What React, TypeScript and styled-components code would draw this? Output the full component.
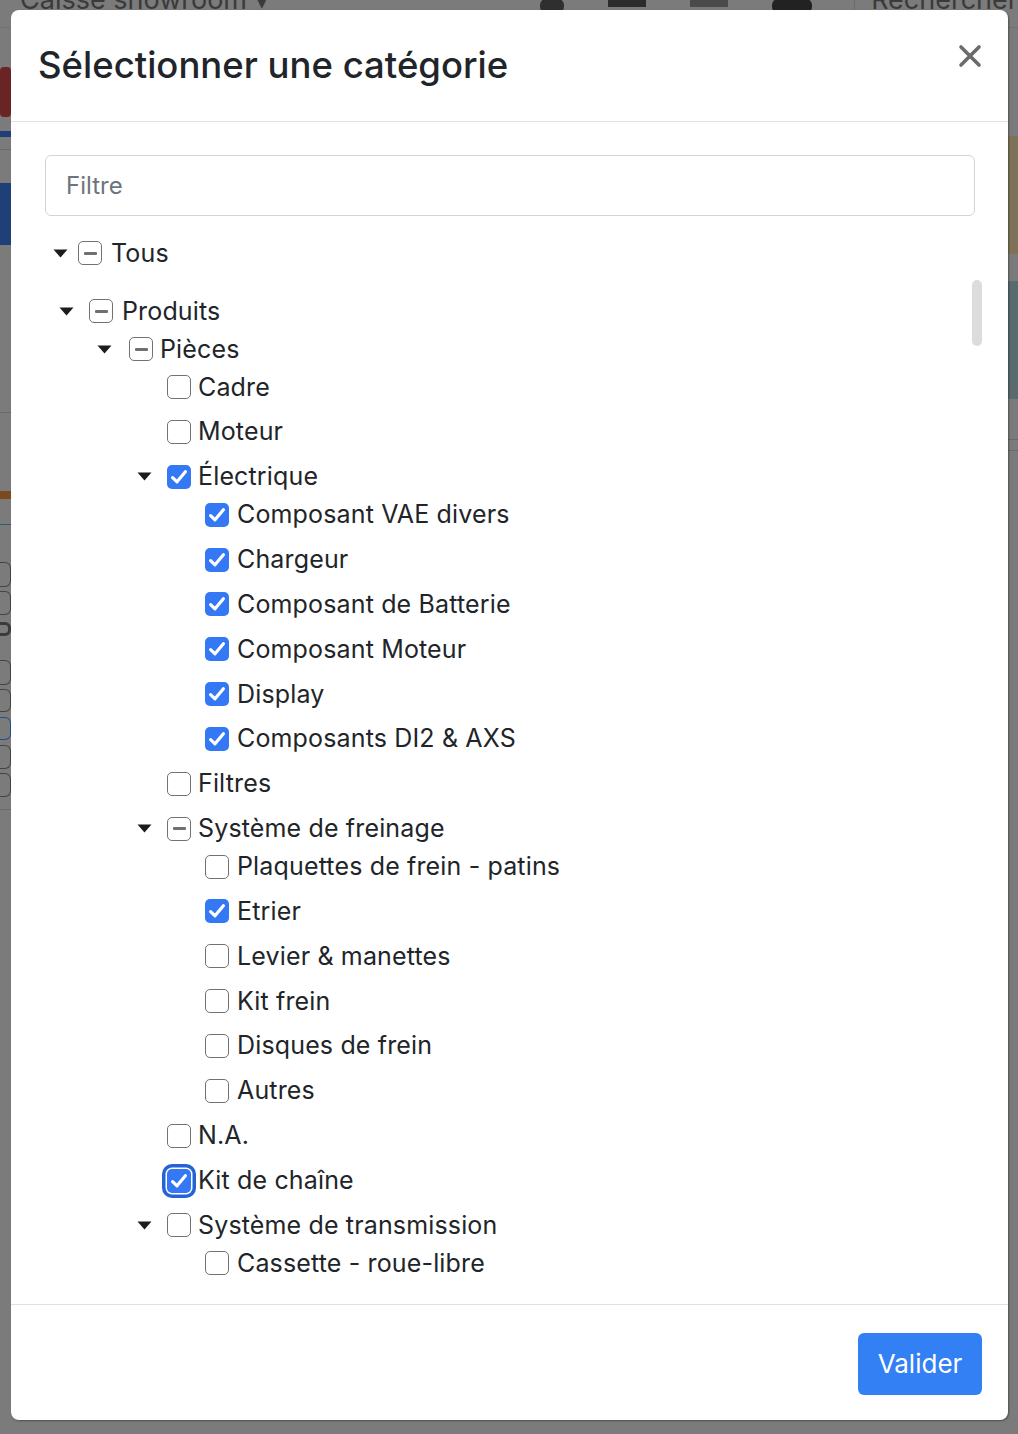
import React from "react";
import styled, { createGlobalStyle } from "styled-components";

const GlobalStyle = createGlobalStyle`
  html, body { margin: 0; padding: 0; }
  body {
    font-family: Inter, "Noto Sans", "Liberation Sans", sans-serif;
    background: #7b7b7b;
    color: #212529;
  }
  * { box-sizing: border-box; }
`;

/* ---------- dimmed page behind the modal ---------- */

const Page = styled.div`
  position: relative;
  width: 1018px;
  height: 1434px;
  overflow: hidden;
  background: #7b7b7b;
`;

const TopBar = styled.div`
  height: 28px;
  display: flex;
  align-items: flex-end;
  border-bottom: 1px solid #707070;
  padding-left: 20px;
  position: relative;
`;

const BgTitle = styled.div`
  font-size: 27px;
  line-height: 27px;
  color: #3a3a3a;
  margin-bottom: 14px;
  white-space: nowrap;
  width: 520px;
`;

const BgIcons = styled.div`
  display: flex;
  align-items: flex-start;
  gap: 44px;
  height: 28px;
`;

const BgIcon = styled.div<{ $w: number; $h: number; $c: string; $r?: number }>`
  width: ${(p) => p.$w}px;
  height: ${(p) => p.$h}px;
  background: ${(p) => p.$c};
  border-radius: ${(p) => p.$r ?? 0}px;
`;

const BgSearch = styled.div`
  font-size: 27px;
  line-height: 27px;
  color: #3a3a3a;
  margin-bottom: 14px;
  margin-left: auto;
  padding-left: 16px;
  border-left: 1px solid #6c6c6c;
  white-space: nowrap;
`;

const BgBody = styled.div`
  display: flex;
  justify-content: space-between;
  height: 1405px;
`;

const BgSide = styled.div`
  width: 11px;
  display: flex;
  flex-direction: column;
`;

const BgBlock = styled.div<{ $h: number; $c: string; $mt?: number; $r?: number }>`
  height: ${(p) => p.$h}px;
  background: ${(p) => p.$c};
  margin-top: ${(p) => p.$mt ?? 0}px;
  border-radius: ${(p) => p.$r ?? 0}px;
`;

const BgOutline = styled.div<{ $mt: number; $h: number; $c?: string; $bw?: number }>`
  height: ${(p) => p.$h}px;
  margin-top: ${(p) => p.$mt}px;
  border: ${(p) => p.$bw ?? 1.5}px solid ${(p) => p.$c ?? "#444444"};
  border-left: none;
  border-radius: 0 6px 6px 0;
`;

const BgLine = styled.div<{ $mt: number; $c?: string }>`
  height: 1px;
  margin-top: ${(p) => p.$mt}px;
  background: ${(p) => p.$c ?? "#6a6a6a"};
`;

/* ---------- modal ---------- */

const Modal = styled.div`
  position: absolute;
  top: 10px;
  left: 11px;
  width: 997px;
  height: 1410px;
  background: #ffffff;
  border-radius: 8px;
  box-shadow: 1px 1px 2px rgba(0, 0, 0, 0.35);
  display: flex;
  flex-direction: column;
  overflow: hidden;
`;

const Header = styled.div`
  height: 112px;
  flex: none;
  display: flex;
  align-items: center;
  justify-content: space-between;
  padding: 0 26px 0 27px;
  border-bottom: 1.5px solid #dee2e6;
`;

const Title = styled.h1`
  margin: 0 0 2px;
  font-size: 36.5px;
  font-weight: 500;
  letter-spacing: 0;
  color: #212529;
`;

const CloseButton = styled.button`
  width: 24px;
  height: 24px;
  padding: 0;
  border: none;
  background: transparent;
  display: flex;
  align-items: center;
  justify-content: center;
  margin-bottom: 20px;
`;

const Body = styled.div`
  position: relative;
  flex: 1;
  padding: 33px 33px 0 34px;
  overflow: hidden;
`;

const FilterInput = styled.input`
  display: block;
  width: 100%;
  height: 61px;
  border: 1.5px solid #ced4da;
  border-radius: 6px;
  padding: 0 20px;
  font-family: inherit;
  font-size: 24px;
  color: #212529;
  outline: none;
  &::placeholder { color: #6c757d; }
`;

const Tree = styled.ul`
  list-style: none;
  margin: 18px 0 0;
  padding: 0;
`;

const Row = styled.li<{ $pad: number; $leaf: boolean; $after?: number }>`
  height: 38px;
  display: flex;
  align-items: center;
  padding-left: ${(p) => p.$pad}px;
  margin-bottom: ${(p) => (p.$after ?? (p.$leaf ? 6.85 : 0))}px;
`;

const CaretSlot = styled.span<{ $gap: number }>`
  width: 15px;
  height: 9px;
  margin-right: ${(p) => p.$gap}px;
  display: flex;
`;

const Box = styled.span<{ $state: "on" | "off" | "ind"; $focus?: boolean }>`
  width: 24px;
  height: 24px;
  flex: none;
  border-radius: 5px;
  display: flex;
  align-items: center;
  justify-content: center;
  background: ${(p) => (p.$state === "on" ? "#3478f6" : "#ffffff")};
  border: ${(p) => (p.$state === "on" ? "none" : "1.5px solid #727272")};
  box-shadow: ${(p) =>
    p.$focus ? "0 0 0 1.5px #ffffff, 0 0 0 5px #2563d4" : "none"};
`;

const Dash = styled.span`
  width: 13px;
  height: 3px;
  border-radius: 1px;
  background: #707070;
`;

const Label = styled.span<{ $gap: number }>`
  margin-left: ${(p) => p.$gap}px;
  font-size: 25px;
  letter-spacing: 0.15px;
  color: #212529;
  white-space: nowrap;
  line-height: 1;
`;

const Thumb = styled.div`
  position: absolute;
  left: 961px;
  top: 158px;
  width: 10px;
  height: 66px;
  border-radius: 5px;
  background: #dcdcdc;
`;

const Footer = styled.div`
  flex: none;
  height: 116px;
  border-top: 1.5px solid #dee2e6;
  display: flex;
  align-items: center;
  justify-content: flex-end;
  padding: 0 26px;
`;

const PrimaryButton = styled.button`
  width: 124px;
  height: 62px;
  border: none;
  border-radius: 6px;
  background: #3380f5;
  color: #ffffff;
  font-family: inherit;
  font-size: 26px;
  margin-top: 2px;
`;

/* ---------- data ---------- */

type State = "on" | "off" | "ind";
interface Node {
  label: string;
  depth: number;
  state: State;
  caret?: boolean;
  focus?: boolean;
  after?: number;
}

const nodes: Node[] = [
  { label: "Tous", depth: 0, state: "ind", caret: true, after: 20 },
  { label: "Produits", depth: 1, state: "ind", caret: true },
  { label: "Pièces", depth: 2, state: "ind", caret: true },
  { label: "Cadre", depth: 3, state: "off" },
  { label: "Moteur", depth: 3, state: "off" },
  { label: "Électrique", depth: 3, state: "on", caret: true },
  { label: "Composant VAE divers", depth: 4, state: "on" },
  { label: "Chargeur", depth: 4, state: "on" },
  { label: "Composant de Batterie", depth: 4, state: "on" },
  { label: "Composant Moteur", depth: 4, state: "on" },
  { label: "Display", depth: 4, state: "on" },
  { label: "Composants DI2 & AXS", depth: 4, state: "on" },
  { label: "Filtres", depth: 3, state: "off" },
  { label: "Système de freinage", depth: 3, state: "ind", caret: true },
  { label: "Plaquettes de frein - patins", depth: 4, state: "off" },
  { label: "Etrier", depth: 4, state: "on" },
  { label: "Levier & manettes", depth: 4, state: "off" },
  { label: "Kit frein", depth: 4, state: "off" },
  { label: "Disques de frein", depth: 4, state: "off" },
  { label: "Autres", depth: 4, state: "off" },
  { label: "N.A.", depth: 3, state: "off" },
  { label: "Kit de chaîne", depth: 3, state: "on", focus: true },
  { label: "Système de transmission", depth: 3, state: "off", caret: true },
  { label: "Cassette - roue-libre", depth: 4, state: "off" },
];

const contentLeft = 45;
const cbX = [78, 89, 129, 167, 205];
const caretX = [53, 59, 97, 137, 175];
const labelGap = [9, 9, 7, 7, 8];

const Caret = () => (
  <svg width="15" height="9" viewBox="0 0 15 9">
    <path d="M0.5 0.5 H14.5 L7.5 8.5 Z" fill="#1c1c1c" />
  </svg>
);

const Check = () => (
  <svg width="24" height="24" viewBox="0 0 24 24">
    <path
      d="M5.6 12.6 L10 16.8 L18.4 6.8"
      fill="none"
      stroke="#ffffff"
      strokeWidth="3.2"
      strokeLinecap="round"
      strokeLinejoin="round"
    />
  </svg>
);

const CloseIcon = () => (
  <svg width="24" height="24" viewBox="0 0 24 24">
    <path
      d="M3 3 L21 21 M21 3 L3 21"
      stroke="#6b6b6b"
      strokeWidth="3.6"
      strokeLinecap="round"
    />
  </svg>
);

export default function App() {
  return (
    <>
      <GlobalStyle />
      <Page>
        <TopBar>
          <BgTitle>Caisse showroom ▾</BgTitle>
          <BgIcons>
            <BgIcon $w={24} $h={14} $c="#2f2f2f" $r={6} />
            <BgIcon $w={38} $h={8} $c="#2c2c2c" />
            <BgIcon $w={38} $h={8} $c="#4a4a4a" />
            <BgIcon $w={40} $h={14} $c="#222222" $r={6} />
          </BgIcons>
          <BgSearch>Rechercher</BgSearch>
        </TopBar>
        <BgBody>
          <BgSide>
            <BgBlock $h={50} $c="#6b2424" $mt={39} $r={4} />
            <BgBlock $h={6} $c="#1e3f78" $mt={14} />
            <BgLine $mt={12} />
            <BgBlock $h={62} $c="#1e3f78" $mt={33} />
            <BgLine $mt={167} />
            <BgBlock $h={8} $c="#7a4a1e" $mt={78} />
            <BgLine $mt={25} $c="#2e5b78" />
            <BgOutline $mt={37} $h={25} />
            <BgOutline $mt={4} $h={24} />
            <BgOutline $mt={7} $h={14} $bw={3} $c="#3a3a3a" />
            <BgOutline $mt={24} $h={25} />
            <BgOutline $mt={4} $h={23} />
            <BgOutline $mt={5} $h={23} $c="#234f8a" />
            <BgOutline $mt={5} $h={24} />
            <BgOutline $mt={4} $h={24} />
            <BgLine $mt={12} />
          </BgSide>
          <BgSide>
            <BgBlock $h={118} $c="#7d7258" $mt={108} />
            <BgBlock $h={118} $c="#5a6b70" $mt={27} />
            <BgLine $mt={40} />
            <BgLine $mt={10} />
          </BgSide>
        </BgBody>

        <Modal>
          <Header>
            <Title>Sélectionner une catégorie</Title>
            <CloseButton aria-label="Fermer">
              <CloseIcon />
            </CloseButton>
          </Header>
          <Body>
            <FilterInput placeholder="Filtre" />
            <Tree>
              {nodes.map((n, i) => {
                const d = n.depth;
                const pad = (n.caret ? caretX[d] : cbX[d]) - contentLeft;
                const gap = cbX[d] - caretX[d] - 15;
                return (
                  <Row key={i} $pad={pad} $leaf={!n.caret} $after={n.after}>
                    {n.caret && (
                      <CaretSlot $gap={gap}>
                        <Caret />
                      </CaretSlot>
                    )}
                    <Box $state={n.state} $focus={n.focus}>
                      {n.state === "on" && <Check />}
                      {n.state === "ind" && <Dash />}
                    </Box>
                    <Label $gap={labelGap[d]}>{n.label}</Label>
                  </Row>
                );
              })}
            </Tree>
            <Thumb />
          </Body>
          <Footer>
            <PrimaryButton>Valider</PrimaryButton>
          </Footer>
        </Modal>
      </Page>
    </>
  );
}
